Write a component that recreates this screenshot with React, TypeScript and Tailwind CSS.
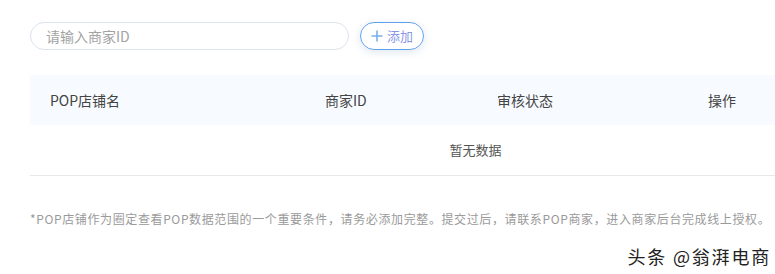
import React from 'react';

const font = { fontFamily: '"Noto Sans CJK SC", "Noto Sans", sans-serif' };

const columns = [
  { label: 'POP店铺名', width: 'w-[275px]' },
  { label: '商家ID', width: 'w-[172px]' },
  { label: '审核状态', width: 'w-[211px]' },
  { label: '操作', width: 'flex-1' },
];

const App: React.FC = () => {
  return (
    <div className="w-[775px] h-[274px] bg-white overflow-hidden" style={font}>
      <div className="pl-[30px] pt-[22px]">
        {/* Search bar */}
        <div className="flex items-center gap-[11px]">
          <input
            placeholder="请输入商家ID"
            className="w-[319px] h-[28px] rounded-full border border-[#dbe3ec] px-[15px] text-[14px] text-[#333] placeholder:text-[#a3a3a3] outline-none"
          />
          <button className="flex items-center h-[28px] w-[64px] justify-center gap-[4px] rounded-full border border-[#62a2ea] text-[13px] text-[#8a97e8] shadow-[0_2px_8px_rgba(80,120,180,0.18)]">
            <svg width="12" height="12" viewBox="0 0 12 12">
              <path d="M6 0.5v11M0.5 6h11" stroke="#79aeea" strokeWidth="1.6" />
            </svg>
            添加
          </button>
        </div>

        {/* Table */}
        <div className="mt-[25px]">
          <div className="flex items-center h-[50px] bg-[#f7fbff] pl-[20px] text-[14px] text-[#444]">
            {columns.map((c) => (
              <div key={c.label} className={c.width}>
                {c.label}
              </div>
            ))}
          </div>
          <div className="flex items-center justify-center h-[51px] border-b border-[#e8e8e8] text-[13px] text-[#555] pl-[146px]">
            暂无数据
          </div>
        </div>

        <p className="mt-[33px] text-[12px] text-[#9a9a9a] leading-[20px] tracking-[0.62px] whitespace-nowrap">
          *POP店铺作为圈定查看POP数据范围的一个重要条件，请务必添加完整。提交过后，请联系POP商家，进入商家后台完成线上授权。
        </p>
      </div>

      <div className="flex justify-end pr-[4px] mt-[15px]">
        <span className="text-[18px] text-[#222] leading-[24px] tracking-[1.8px]">头条 @翁湃电商</span>
      </div>
    </div>
  );
};

export default App;
